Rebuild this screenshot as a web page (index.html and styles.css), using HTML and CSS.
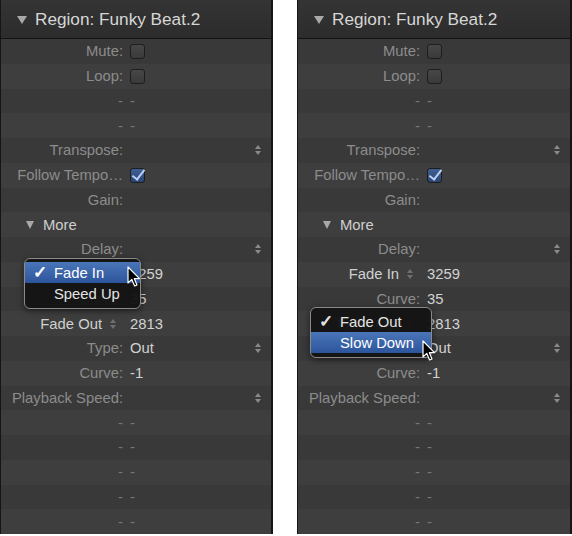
FILE: index.html
```html
<!doctype html>
<html>
<head>
<meta charset="utf-8">
<link rel="stylesheet" href="styles.css">
<title>Region inspector</title>
</head>
<body>
<div class="panes">

<div class="panel">
  <div class="head"><span class="tri"></span>Region: Funky Beat.2</div>
  <div class="row"><span class="lbl">Mute:</span><span class="val"><span class="chk"></span></span></div>
  <div class="row"><span class="lbl">Loop:</span><span class="val"><span class="chk"></span></span></div>
  <div class="row"><span class="lbl dash">-</span><span class="val dash">-</span></div>
  <div class="row"><span class="lbl dash">-</span><span class="val dash">-</span></div>
  <div class="row"><span class="lbl">Transpose:</span><span class="val"></span><span class="step"></span></div>
  <div class="row"><span class="lbl">Follow Tempo…</span><span class="val"><span class="chk on"></span></span></div>
  <div class="row"><span class="lbl">Gain:</span><span class="val"></span></div>
  <div class="row more"><span class="tri small"></span>More</div>
  <div class="row"><span class="lbl">Delay:</span><span class="val"></span><span class="step"></span></div>
  <div class="row"><span class="lbl pop">Fade In<span class="step mini"></span></span><span class="val">3259</span></div>
  <div class="row"><span class="lbl">Curve:</span><span class="val">35</span></div>
  <div class="row"><span class="lbl pop">Fade Out<span class="step mini"></span></span><span class="val">2813</span></div>
  <div class="row"><span class="lbl">Type:</span><span class="val">Out</span><span class="step"></span></div>
  <div class="row"><span class="lbl">Curve:</span><span class="val">-1</span></div>
  <div class="row"><span class="lbl">Playback Speed:</span><span class="val"></span><span class="step"></span></div>
  <div class="row"><span class="lbl dash">-</span><span class="val dash">-</span></div>
  <div class="row"><span class="lbl dash">-</span><span class="val dash">-</span></div>
  <div class="row"><span class="lbl dash">-</span><span class="val dash">-</span></div>
  <div class="row"><span class="lbl dash">-</span><span class="val dash">-</span></div>
  <div class="row"><span class="lbl dash">-</span><span class="val dash">-</span></div>

  <div class="menu menu-in">
    <div class="item sel"><span class="tick">✓</span>Fade In</div>
    <div class="item"><span class="tick"></span>Speed Up</div>
  </div>
  <svg class="cursor cur-in" width="14" height="22" viewBox="0 0 14 22"><path d="M1 1 L1 17 L4.8 13.4 L7.6 20 L10 19 L7.3 12.6 L12.5 12.6 Z" fill="#000" stroke="#fff" stroke-width="1.2" stroke-linejoin="round"/></svg>
</div>

<div class="panel">
  <div class="head"><span class="tri"></span>Region: Funky Beat.2</div>
  <div class="row"><span class="lbl">Mute:</span><span class="val"><span class="chk"></span></span></div>
  <div class="row"><span class="lbl">Loop:</span><span class="val"><span class="chk"></span></span></div>
  <div class="row"><span class="lbl dash">-</span><span class="val dash">-</span></div>
  <div class="row"><span class="lbl dash">-</span><span class="val dash">-</span></div>
  <div class="row"><span class="lbl">Transpose:</span><span class="val"></span><span class="step"></span></div>
  <div class="row"><span class="lbl">Follow Tempo…</span><span class="val"><span class="chk on"></span></span></div>
  <div class="row"><span class="lbl">Gain:</span><span class="val"></span></div>
  <div class="row more"><span class="tri small"></span>More</div>
  <div class="row"><span class="lbl">Delay:</span><span class="val"></span><span class="step"></span></div>
  <div class="row"><span class="lbl pop">Fade In<span class="step mini"></span></span><span class="val">3259</span></div>
  <div class="row"><span class="lbl">Curve:</span><span class="val">35</span></div>
  <div class="row"><span class="lbl pop">Fade Out<span class="step mini"></span></span><span class="val">2813</span></div>
  <div class="row"><span class="lbl">Type:</span><span class="val">Out</span><span class="step"></span></div>
  <div class="row"><span class="lbl">Curve:</span><span class="val">-1</span></div>
  <div class="row"><span class="lbl">Playback Speed:</span><span class="val"></span><span class="step"></span></div>
  <div class="row"><span class="lbl dash">-</span><span class="val dash">-</span></div>
  <div class="row"><span class="lbl dash">-</span><span class="val dash">-</span></div>
  <div class="row"><span class="lbl dash">-</span><span class="val dash">-</span></div>
  <div class="row"><span class="lbl dash">-</span><span class="val dash">-</span></div>
  <div class="row"><span class="lbl dash">-</span><span class="val dash">-</span></div>

  <div class="menu menu-out">
    <div class="item"><span class="tick">✓</span>Fade Out</div>
    <div class="item sel"><span class="tick"></span>Slow Down</div>
  </div>
  <svg class="cursor cur-out" width="14" height="22" viewBox="0 0 14 22"><path d="M1 1 L1 17 L4.8 13.4 L7.6 20 L10 19 L7.3 12.6 L12.5 12.6 Z" fill="#000" stroke="#fff" stroke-width="1.2" stroke-linejoin="round"/></svg>
</div>

</div>
</body>
</html>
```

FILE: styles.css
```css
body {
    margin: 0;
    background: #fff;
    font-family: "Liberation Sans", Arial, sans-serif;
    font-size: 14.8px;
}
.panes {
    display: flex;
    gap: 24px;
    height: 534px;
}
.panel {
    position: relative;
    width: 273px;
    background: #3b3b3b;
    border: 1px solid #151515;
    border-right-width: 2px;
    border-top: none;
    box-sizing: border-box;
    height: 534px;
}
.panel + .panel {
    width: 275px;
}
.head {
    height: 37px;
    border-bottom: 1px solid #121212;
    background: linear-gradient(#343434, #2c2c2c);
    color: #d6d6d6;
    font-size: 17.2px;
    display: flex;
    align-items: center;
    padding-left: 16px;
    padding-top: 1px;
    box-sizing: content-box;
}
.tri {
    width: 0;
    height: 0;
    border-left: 5px solid transparent;
    border-right: 5px solid transparent;
    border-top: 8px solid #a8a8a8;
    margin-right: 8px;
}
.tri.small {
    border-left-width: 4px;
    border-right-width: 4px;
    border-top-width: 8px;
    margin-right: 9px;
}
.row {
    height: 24.75px;
    display: grid;
    grid-template-columns: 122px 1fr 8px;
    column-gap: 7px;
    align-items: center;
    padding-right: 9px;
    color: #888;
    white-space: nowrap;
}
.row:nth-of-type(odd) {
    background: #3e3e3e;
}
.row:nth-of-type(even) {
    background: #393939;
}
.lbl {
    text-align: right;
    color: #8c8c8c;
}
.val {
    color: #d2d2d2;
    display: flex;
    align-items: center;
}
.dash {
    color: #777;
}
.lbl.pop {
    color: #d0d0d0;
    display: flex;
    justify-content: flex-end;
    align-items: center;
    padding-right: 6px;
}
.more {
    display: flex;
    column-gap: 0;
    padding-left: 25px;
    color: #cfcfcf;
    align-items: center;
}
.chk {
    width: 13px;
    height: 13px;
    border: 1px solid #1d1d1d;
    border-radius: 3px;
    background: linear-gradient(#474747, #3a3a3a);
    position: relative;
}
.chk.on {
    background: linear-gradient(#3f5f95, #2b4572);
}
.chk.on::after {
    content: "";
    position: absolute;
    left: 4px;
    top: -2px;
    width: 5px;
    height: 11px;
    border-right: 2.5px solid #b9d0f4;
    border-bottom: 2.5px solid #b9d0f4;
    transform: rotate(38deg);
}
.step {
    width: 8px;
    height: 12px;
    position: relative;
}
.step::before,
.step::after {
    content: "";
    position: absolute;
    left: 1px;
    border-left: 3px solid transparent;
    border-right: 3px solid transparent;
}
.step::before {
    top: 1px;
    border-bottom: 4px solid #8a8a8a;
}
.step::after {
    bottom: 1px;
    border-top: 4px solid #8a8a8a;
}
.step.mini {
    margin-left: 7px;
}
.step.mini::before {
    border-bottom-color: #6f6f6f;
}
.step.mini::after {
    border-top-color: #6f6f6f;
}
.menu {
    position: absolute;
    background: rgba(20, 20, 20, 0.96);
    border: 1px solid #8a8a8a;
    border-radius: 6px;
    padding: 3px 0 4px;
    color: #e4e4e4;
    box-shadow: 0 2px 6px rgba(0, 0, 0, 0.5);
}
.menu-in {
    left: 23px;
    top: 258px;
    width: 115px;
}
.menu-out {
    left: 12px;
    top: 307px;
    width: 120px;
}
.item {
    height: 21px;
    display: flex;
    align-items: center;
}
.item.sel {
    background: linear-gradient(#4b75b9, #2c559b);
    color: #fff;
}
.tick {
    width: 29px;
    padding-left: 8px;
    box-sizing: border-box;
    font-size: 17px;
    font-weight: bold;
}
.cursor {
    position: absolute;
}
.cur-in {
    left: 126px;
    top: 266px;
}
.cur-out {
    left: 124px;
    top: 340px;
}
```
